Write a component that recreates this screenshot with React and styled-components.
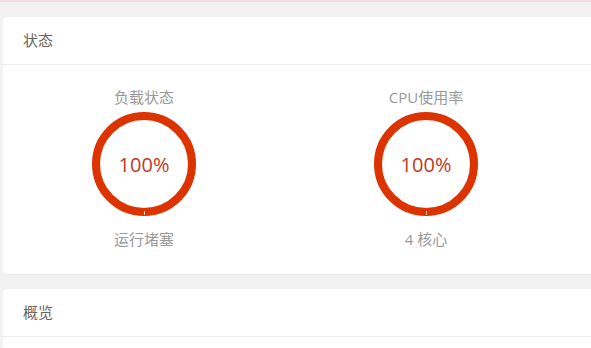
import styled, { createGlobalStyle } from "styled-components";

const GlobalStyle = createGlobalStyle`
  html, body {
    margin: 0;
    padding: 0;
    background: #f2f2f2;
    font-family: "Open Sans", "Noto Sans CJK SC", sans-serif;
    overflow: hidden;
  }
`;

const stats = [
  { title: "负载状态", value: "100%", note: "运行堵塞" },
  { title: "CPU使用率", value: "100%", note: "4 核心" },
];

export default function App() {
  return (
    <Page>
      <GlobalStyle />
      <TopStrip />
      <Card>
        <CardHeader>状态</CardHeader>
        <StatusBody>
          {stats.map((s) => (
            <StatItem key={s.title}>
              <StatTitle>{s.title}</StatTitle>
              <Ring>
                <RingValue>{s.value}</RingValue>
                <RingSeam />
              </Ring>
              <StatNote>{s.note}</StatNote>
            </StatItem>
          ))}
        </StatusBody>
      </Card>
      <Card>
        <CardHeader>概览</CardHeader>
        <EmptyBody />
      </Card>
    </Page>
  );
}

//------ Style ------//
const Page = styled.div`
  width: 591px;
  height: 348px;
  overflow: hidden;
`;
const TopStrip = styled.div`
  height: 2px;
  background: #f3dde0;
`;
const Card = styled.div`
  width: 640px;
  margin: 15px 0 0 3px;
  background: #fff;
  border-radius: 4px;
  box-shadow: 0 1px 1px rgba(0, 0, 0, 0.03);
`;
const CardHeader = styled.div`
  height: 47px;
  line-height: 47px;
  padding-left: 20px;
  font-size: 15px;
  color: #666;
  border-bottom: 1px solid #ececec;
`;
const StatusBody = styled.div`
  display: flex;
  padding: 22px 0 25px;
`;
const StatItem = styled.div`
  width: 282px;
  display: flex;
  flex-direction: column;
  align-items: center;
`;
const StatTitle = styled.div`
  font-size: 15px;
  line-height: 20px;
  color: #999;
  margin-bottom: 5px;
`;
const Ring = styled.div`
  position: relative;
  box-sizing: border-box;
  width: 104px;
  height: 104px;
  border-radius: 50%;
  border: 8px solid #dc3300;
  display: flex;
  align-items: center;
  justify-content: center;
`;
const RingValue = styled.span`
  font-size: 20px;
  font-weight: 400;
  color: #c4381f;
`;
const RingSeam = styled.span`
  position: absolute;
  bottom: -7px;
  left: 50%;
  width: 1px;
  height: 4px;
  background: #f0c0b0;
`;
const StatNote = styled.div`
  margin-top: 13px;
  font-size: 15px;
  line-height: 20px;
  color: #999;
`;
const EmptyBody = styled.div`
  height: 60px;
`;
